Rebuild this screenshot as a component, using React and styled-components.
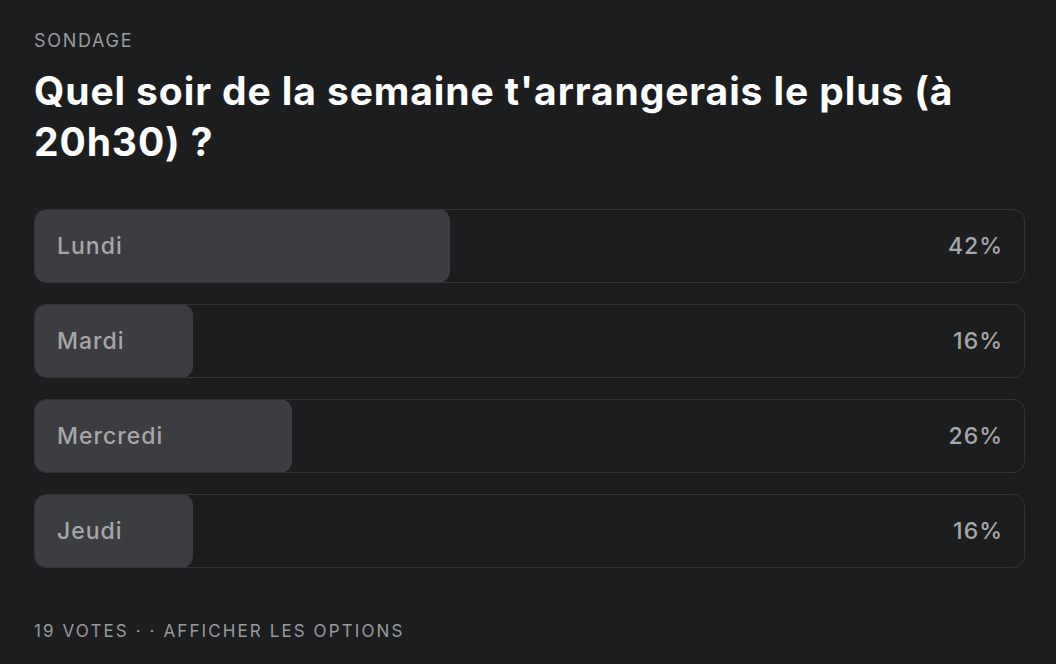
import React from "react";
import styled, { createGlobalStyle } from "styled-components";

const Global = createGlobalStyle`
  html, body { margin: 0; padding: 0; background: #1c1d1f; }
  body { font-family: Inter, "Noto Sans", sans-serif; -webkit-font-smoothing: antialiased; }
`;

const Page = styled.div`
  width: 1056px;
  height: 664px;
  box-sizing: border-box;
  padding: 29px 31px 0 34px;
  background: #1c1d1f;
  display: flex;
  flex-direction: column;
`;

const Kicker = styled.div`
  color: #9b9c9e;
  font-size: 18px;
  letter-spacing: 1.7px;
  line-height: 24px;
  text-transform: uppercase;
`;

const Title = styled.h1`
  margin: 12px 0 0;
  color: #ffffff;
  font-size: 39px;
  font-weight: 700;
  line-height: 51px;
  letter-spacing: 0.9px;
`;

const Options = styled.div`
  margin-top: 42px;
  display: flex;
  flex-direction: column;
  gap: 21px;
`;

const Row = styled.div`
  position: relative;
  height: 74px;
  box-sizing: border-box;
  border: 1px solid #323335;
  border-radius: 12px;
  overflow: hidden;
  display: flex;
  align-items: center;
  justify-content: space-between;
  padding: 0 21px 0 22px;
`;

const Fill = styled.div`
  position: absolute;
  left: -1px;
  top: -1px;
  bottom: -1px;
  background: #3c3d40;
  border-radius: 12px;
`;

const Label = styled.span`
  position: relative;
  color: #a6a7a9;
  font-size: 23px;
  font-weight: 500;
  letter-spacing: 1px;
`;

const Pct = styled(Label)``;

const Footer = styled.div`
  margin-top: 51px;
  color: #999a9c;
  font-size: 17px;
  letter-spacing: 2.1px;
  line-height: 24px;
`;

const data = [
  ["Lundi", 42],
  ["Mardi", 16],
  ["Mercredi", 26],
  ["Jeudi", 16],
];

export default function App() {
  return (
    <>
      <Global />
      <Page>
        <Kicker>Sondage</Kicker>
        <Title>Quel soir de la semaine t'arrangerais le plus (à 20h30) ?</Title>
        <Options>
          {data.map(([name, pct]) => (
            <Row key={name}>
              <Fill style={{ width: `calc(${pct}% + 1px)` }} />
              <Label>{name}</Label>
              <Pct>{pct}%</Pct>
            </Row>
          ))}
        </Options>
        <Footer>19 VOTES · · AFFICHER LES OPTIONS</Footer>
      </Page>
    </>
  );
}
